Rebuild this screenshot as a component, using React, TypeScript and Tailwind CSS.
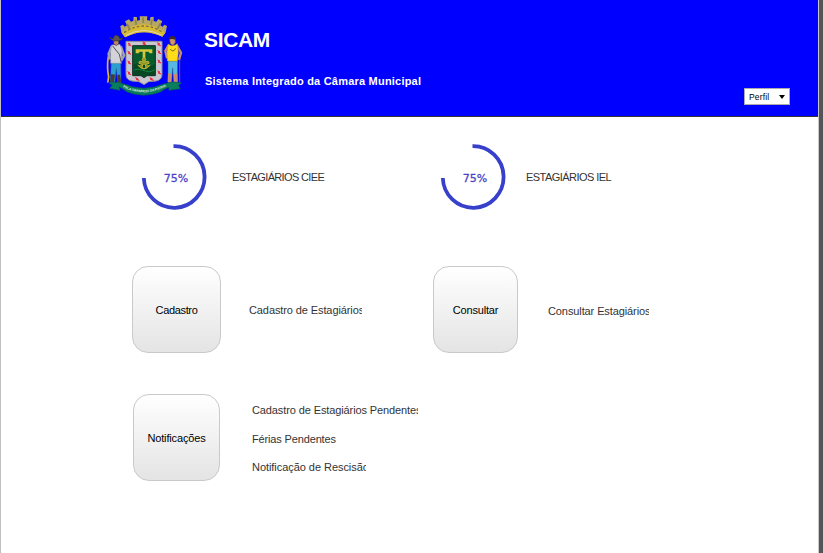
import React from "react";

function Crest() {
  return (
    <svg className="block h-[90px] w-[100px] shrink-0" viewBox="0 0 300 270">
      {/* mural crown */}
      <path d="M79 67 L76 48 L84 44 L89 50 L96 46 L90 34 L102 28 L108 35 L115 32 L116 20 L126 22 L126 32 L135 30 L134 19 L157 19 L156 30 L165 32 L166 22 L176 20 L176 33 L184 35 L190 27 L202 34 L196 46 L203 50 L208 44 L216 48 L212 67 L202 80 Q145 52 90 82 Z" fill="#b8a762" />
      <path d="M80 68 Q145 18 211 68 L202 80 Q145 52 90 82 Z" fill="#d9bb32" />
      <path d="M87 68 Q145 28 204 68" fill="none" stroke="#77704f" strokeWidth="4" strokeDasharray="8 6" />
      <path d="M93 76 Q145 47 199 75" fill="none" stroke="#ded9b8" strokeWidth="3" />
      <path d="M96 42 L105 58 M121 28 L124 45 M144 22 L145 39 M171 28 L168 45 M196 40 L187 58" stroke="#8d8454" strokeWidth="5" />
      {/* shield */}
      <path d="M93 94 H201 V193 Q201 210 183 213 L161 215 L147 224 L132 215 L111 213 Q93 210 93 193 Z" fill="#c9c7cf" stroke="#8c8a94" strokeWidth="3" />
      <path d="M113 107 H181 V197 H156 L147 203 L138 197 H113 Z" fill="#075c2e" stroke="#142c25" strokeWidth="3" />
      <path d="M116 164 Q132 154 147 164 T179 162 V195 H155 L147 200 L139 195 H116 Z" fill="#064823" />
      <path d="M122 118 H172 V130 H164 L161 125 H151 V150 H143 V125 H134 L131 130 H122 Z" fill="#d5c63c" />
      <path d="M147 141 Q156 147 149 157 Q164 149 162 160 L151 164 Q157 173 147 177 Q137 173 143 164 L132 160 Q130 149 145 157 Q138 147 147 141 Z M128 165 Q147 188 166 165" fill="#8b962b" stroke="#c6b62f" strokeWidth="3" />
      <path d="M116 180 Q132 174 147 182 T179 180" fill="none" stroke="#16803f" strokeWidth="3" />
      <path d="M99 99 l7 3 -3 2 6 4 -9 -3 3 -2 z M143 96 l8 3 -4 2 6 3 -10 -2 4 -2 z M187 98 l7 3 -3 2 6 4 -9 -3 3 -2 z M98 124 l7 3 -3 2 6 4 -9 -3 3 -2 z M188 122 l7 3 -3 2 6 4 -9 -3 3 -2 z M98 153 l7 3 -3 2 6 4 -9 -3 3 -2 z M188 150 l7 3 -3 2 6 4 -9 -3 3 -2 z M98 185 l7 3 -3 2 6 4 -9 -3 3 -2 z M188 183 l7 3 -3 2 6 4 -9 -3 3 -2 z M121 203 l8 3 -3 2 7 3 -10 -2 3 -2 z M164 203 l8 3 -3 2 7 3 -10 -2 3 -2 z" fill="#ee1c2c" stroke="#ee1c2c" strokeWidth="2" />
      {/* left supporter */}
      <path d="M40 139 Q35 171 41 201 L38 218" fill="none" stroke="#e0b53c" strokeWidth="5" />
      <path d="M49 156 L46 218 H59 L64 174 L68 218 H78 L77 156 Z" fill="#2b9fd0" stroke="#31708e" strokeWidth="1.5" />
      <path d="M51 108 L41 132 L45 148 M77 109 L87 136 L79 151" fill="none" stroke="#a3a1a9" strokeWidth="8" />
      <path d="M50 105 L75 103 L81 120 L80 160 H47 L46 125 Z" fill="#d3d2d8" stroke="#85838b" strokeWidth="1.5" />
      <path d="M53 108 L73 133 L79 158" fill="none" stroke="#4d4b52" strokeWidth="3" />
      <path d="M56 90 H71 V101 L64 107 L56 101 Z" fill="#bd8a69" stroke="#50342c" strokeWidth="2" />
      <path d="M44 82 L54 87 L58 78 Q66 72 72 80 L74 86 L85 84 Q77 94 64 93 Q49 94 44 82 Z" fill="#5b544f" stroke="#353338" strokeWidth="2" />
      <path d="M48 192 L46 217 H57 L60 194 Z M67 194 L66 217 H79 L75 194 Z" fill="#463b35" />
      {/* right supporter */}
      <path d="M219 153 H248 L247 218 H236 L233 174 L229 218 H219 Z" fill="#55b9e2" stroke="#28617c" strokeWidth="1.5" />
      <path d="M221 105 L211 123 L216 145 M245 105 L258 128 L252 150" fill="none" stroke="#c98f6c" strokeWidth="7" />
      <path d="M220 102 L228 107 L240 106 L247 101 L250 128 L247 153 H217 L216 125 Z" fill="#ffdc18" stroke="#b3a02f" strokeWidth="1.5" />
      <path d="M223 85 H241 V98 L234 107 L226 101 Z" fill="#cf9470" stroke="#68432d" strokeWidth="2" />
      <path d="M221 84 Q228 73 241 81 L243 91 Q231 84 222 89 Z" fill="#3b2b25" />
      <path d="M254 148 V216 M226 117 Q234 130 242 115" fill="none" stroke="#7b6230" strokeWidth="3" />
      <path d="M219 190 L218 216 H229 L230 192 Z M237 192 L237 216 H248 L247 190 Z" fill="#c88d6c" />
      {/* motto ribbon */}
      <path d="M42 219 L69 217 Q95 224 114 231 Q146 238 178 231 Q207 220 233 216 L260 218 L250 225 L256 236 L222 241 L221 232 Q207 237 196 246 Q146 265 97 246 Q82 235 72 230 L75 241 L44 235 L52 226 Z" fill="#087f5c" stroke="#07594a" strokeWidth="2" />
      <path id="motto-line" d="M84 232 Q147 262 211 230" fill="none" />
      <text className="font-['Liberation_Sans',sans-serif] font-bold" fontSize="9.5" fill="#e5f2e7">
        <textPath href="#motto-line">PELA GRANDEZA DA PÁTRIA</textPath>
      </text>
    </svg>
  );
}

function Ring() {
  return (
    <div className="grid h-[66px] w-[66px] shrink-0 place-items-center">
      <svg className="col-start-1 row-start-1 h-[66px] w-[66px]" viewBox="0 0 66 66">
        <path d="M32.5 2.2 A30.4 30.8 0 1 1 2.8 34" fill="none" stroke="#3740cb" strokeWidth="3.8" />
      </svg>
      <span className="col-start-1 row-start-1 mt-0.5 ml-1 font-['DejaVu_Sans',sans-serif] text-[11px] leading-none text-[#4a43c8] [-webkit-text-stroke:0.3px_#4a43c8]">75%</span>
    </div>
  );
}

const tile =
  "flex h-[87px] shrink-0 items-center justify-center rounded-[16px] border border-[#c9c9c9] bg-linear-to-b from-white to-[#e4e4e4] pt-0.5 text-[11px] text-black";
const label = "overflow-hidden whitespace-nowrap text-[11px] leading-[14px] text-[#333]";

export default function App() {
  return (
    <div className="flex h-[553px] w-[823px] overflow-hidden border-l border-[#c0c0c0] bg-white font-['Liberation_Sans',Arial,sans-serif]">
      <div className="w-[817px] shrink-0">
        <header className="flex h-[117px] items-start border-b border-[#333] bg-[#0000ff] pt-2.5 pl-[94px] text-white">
          <Crest />
          <div className="ml-[9px] pt-[18px]">
            <h1 className="text-[21px] leading-6 font-bold tracking-[-0.35px]">SICAM</h1>
            <p className="mt-[22px] ml-px text-[11px] leading-[14px] font-bold tracking-[0.21px] whitespace-nowrap">Sistema Integrado da Câmara Municipal</p>
          </div>
          <button className="mt-[78px] mr-[28px] ml-auto flex h-[17px] w-[46px] items-center justify-between border border-[#aaa] bg-white pt-px pr-1 pl-1 text-[8.5px] leading-none tracking-[0.15px] text-black">
            Perfil
            <svg className="h-[4px] w-[6px]" viewBox="0 0 6 4"><path d="M0 0H6L3 4Z" /></svg>
          </button>
        </header>
        <main>
          <section className="flex items-center pt-[27px] pl-[140px]">
            <Ring />
            <span className={`${label} ml-[25px] w-[100px] tracking-[-0.65px]`}>ESTAGIÁRIOS CIEE</span>
            <div className="ml-[108px]"><Ring /></div>
            <span className={`${label} ml-[20px] w-[100px] tracking-[-0.55px]`}>ESTAGIÁRIOS IEL</span>
          </section>
          <section className="flex items-center pt-[56px] pl-[131px]">
            <button className={`${tile} w-[89px] tracking-[-0.35px]`}>Cadastro</button>
            <span className={`${label} ml-[28px] w-[113px] tracking-[-0.1px]`}>Cadastro de Estagiários</span>
            <button className={`${tile} ml-[71px] w-[85px] tracking-[-0.2px]`}>Consultar</button>
            <span className={`${label} mt-0.5 ml-[30px] w-[101px] tracking-[-0.1px]`}>Consultar Estagiários</span>
          </section>
          <section className="flex items-center pt-[41px] pl-[132px]">
            <button className={`${tile} w-[87px] tracking-[-0.15px]`}>Notificações</button>
            <div className="ml-[32px] flex flex-col pt-px">
              <span className={`${label} w-[166px] tracking-[-0.11px]`}>Cadastro de Estagiários Pendentes</span>
              <span className={`${label} mt-[15px] tracking-[-0.15px]`}>Férias Pendentes</span>
              <span className={`${label} mt-[14px] w-[114px] tracking-[-0.05px]`}>Notificação de Rescisão</span>
            </div>
          </section>
        </main>
      </div>
      <div className="flex-1 border-l border-[#c8c8c8] bg-[#555558]" />
    </div>
  );
}
